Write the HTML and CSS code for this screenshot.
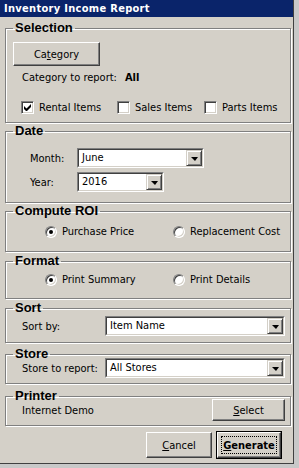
FILE: index.html
```html
<!DOCTYPE html>
<html lang="en">

<head>
    <meta charset="UTF-8">
    <title>Inventory Income Report</title>
    <link rel="stylesheet" href="styles.css">
</head>

<body>
    <div class="window">
        <div class="titlebar">Inventory Income Report</div>

        <!-- Selection -->
        <fieldset class="group sel">
            <legend>Selection</legend>
            <div class="gbody">
                <div class="btn btn-cat">Ca<u>t</u>egory</div>
                <div class="cat-row">
                    <span>Category to report:</span>
                    <b class="cat-val">All</b>
                </div>
                <div class="check-row">
                    <label class="check item-rental"><span class="box on"><svg width="7" height="7" viewBox="0 0 7 7"><path d="M0 2v3l2 2h1l4-4V0L2.5 4.5z" fill="#000"/></svg></span>Rental Items</label>
                    <label class="check item-sales"><span class="box"></span>Sales Items</label>
                    <label class="check item-parts"><span class="box"></span>Parts Items</label>
                </div>
            </div>
        </fieldset>

        <!-- Date -->
        <fieldset class="group date">
            <legend>Date</legend>
            <div class="gbody">
                <div class="field-row">
                    <span class="lbl-date">Month:</span>
                    <div class="select w-month">
                        <div class="select-in"><span class="val">June</span><span class="arrow"><i></i></span></div>
                    </div>
                </div>
                <div class="field-row">
                    <span class="lbl-date">Year:</span>
                    <div class="select w-year">
                        <div class="select-in"><span class="val">2016</span><span class="arrow"><i></i></span></div>
                    </div>
                </div>
            </div>
        </fieldset>

        <!-- Compute ROI -->
        <fieldset class="group roi">
            <legend>Compute ROI</legend>
            <div class="gbody radio-row">
                <label class="radio r-first"><span class="dot on"></span>Purchase Price</label>
                <label class="radio"><span class="dot"></span>Replacement Cost</label>
            </div>
        </fieldset>

        <!-- Format -->
        <fieldset class="group fmt">
            <legend>Format</legend>
            <div class="gbody radio-row">
                <label class="radio r-first"><span class="dot on"></span>Print Summary</label>
                <label class="radio"><span class="dot"></span>Print Details</label>
            </div>
        </fieldset>

        <!-- Sort -->
        <fieldset class="group sort">
            <legend>Sort</legend>
            <div class="gbody field-row">
                <span class="lbl-wide">Sort by:</span>
                <div class="select w-wide">
                    <div class="select-in"><span class="val">Item Name</span><span class="arrow"><i></i></span></div>
                </div>
            </div>
        </fieldset>

        <!-- Store -->
        <fieldset class="group store">
            <legend>Store</legend>
            <div class="gbody field-row">
                <span class="lbl-wide">Store to report:</span>
                <div class="select w-wide">
                    <div class="select-in"><span class="val">All Stores</span><span class="arrow"><i></i></span></div>
                </div>
            </div>
        </fieldset>

        <!-- Printer -->
        <fieldset class="group printer">
            <legend>Printer</legend>
            <div class="gbody printer-row">
                <span>Internet Demo</span>
                <div class="btn btn-select"><u>S</u>elect</div>
            </div>
        </fieldset>

        <div class="actions">
            <div class="btn btn-cancel"><u>C</u>ancel</div>
            <div class="btn-default">
                <div class="btn btn-generate"><span class="focus"><u>G</u>enerate</span></div>
            </div>
        </div>
    </div>
</body>

</html>
```

FILE: styles.css
```css
body,
html {
    margin: 0;
    padding: 0;
}

body {
    background: #c8c8c8;
    font-family: "DejaVu Sans Condensed", "DejaVu Sans", sans-serif;
    font-size: 11px;
    color: #000;
}

.window {
    width: 293px;
    height: 463px;
    background: #d4d0c8;
    border-right: 1px solid #404040;
    border-bottom: 1px solid #404040;
}

.titlebar {
    height: 17px;
    line-height: 17px;
    background: #0a246a;
    color: #fff;
    font-weight: bold;
    letter-spacing: 0.3px;
    padding-left: 4px;
}

/* Group boxes */
.group {
    margin: 0 2px 0 5px;
    padding: 0;
    border: 1px solid #808080;
    box-shadow: inset 1px 1px 0 #fff, 1px 1px 0 #fff;
    min-width: 0;
}

.group legend {
    font-family: "Liberation Sans", Arial, sans-serif;
    font-size: 13px;
    font-weight: bold;
    line-height: 14px;
    padding: 0 2px;
    margin-left: 7px;
}

/* Buttons */
.btn {
    box-sizing: border-box;
    display: flex;
    align-items: center;
    justify-content: center;
    border: 1px solid;
    border-color: #fff #404040 #404040 #fff;
    box-shadow: inset -1px -1px 0 #808080;
    background: #d4d0c8;
}

/* Selection */
.sel {
    margin-top: 4px;
}

.sel .gbody {
    padding: 7px 0 8px 7px;
}

.btn-cat {
    width: 87px;
    height: 24px;
}

.cat-row {
    display: flex;
    margin: 5px 0 0 9px;
    line-height: 13px;
}

.cat-val {
    margin-left: 8px;
}

.check-row {
    display: flex;
    margin: 17px 0 0 8px;
    line-height: 13px;
}

.check {
    display: flex;
    align-items: center;
}

.box {
    box-sizing: border-box;
    width: 13px;
    height: 13px;
    margin-right: 5px;
    border: 1px solid;
    border-color: #808080 #fff #fff #808080;
    box-shadow: inset 1px 1px 0 #404040, inset -1px -1px 0 #d4d0c8;
    background: #fff;
    display: flex;
    align-items: center;
    justify-content: center;
}

.item-rental {
    width: 96px;
}

.item-sales {
    width: 87px;
}

/* Date */
.date {
    margin-top: 1px;
}

.date .gbody {
    padding: 10px 0 10px 24px;
}

.field-row {
    display: flex;
    align-items: center;
}

.date .field-row + .field-row {
    margin-top: 4px;
}

.lbl-date {
    width: 47px;
}

.select {
    box-sizing: border-box;
    height: 20px;
    border: 1px solid;
    border-color: #808080 #fff #fff #808080;
}

.select-in {
    box-sizing: border-box;
    height: 100%;
    display: flex;
    border: 1px solid;
    border-color: #404040 #d4d0c8 #d4d0c8 #404040;
    background: #fff;
}

.val {
    flex: 1;
    padding-left: 3px;
    line-height: 16px;
}

.arrow {
    box-sizing: border-box;
    width: 16px;
    display: flex;
    align-items: center;
    justify-content: center;
    border: 1px solid;
    border-color: #d4d0c8 #404040 #404040 #d4d0c8;
    box-shadow: inset 1px 1px 0 #fff, inset -1px -1px 0 #808080;
    background: #d4d0c8;
}

.arrow i {
    width: 0;
    height: 0;
    border-left: 4px solid transparent;
    border-right: 3px solid transparent;
    border-top: 4px solid #000;
    margin-top: 1px;
}

.w-month {
    width: 127px;
}

.w-year {
    width: 87px;
}

/* Radios */
.roi {
    margin-top: 1px;
}

.roi .gbody {
    padding: 7px 0 13px 39px;
}

.fmt {
    margin-top: 2px;
}

.fmt .gbody {
    padding: 5px 0 12px 39px;
}

.radio-row {
    display: flex;
    line-height: 13px;
}

.radio {
    display: flex;
    align-items: center;
}

.r-first {
    width: 128px;
}

.dot {
    box-sizing: border-box;
    width: 12px;
    height: 12px;
    margin-right: 5px;
    border-radius: 50%;
    border: 1px solid;
    border-color: #808080 #fff #fff #808080;
    box-shadow: inset 1px 1px 0 #404040, inset -1px -1px 0 #d4d0c8;
    background: #fff;
    display: flex;
    align-items: center;
    justify-content: center;
}

.dot.on::after {
    content: "";
    width: 4px;
    height: 4px;
    border-radius: 50%;
    background: #000;
}

/* Sort / Store */
.sort {
    margin-top: 2px;
}

.sort .gbody {
    padding: 1px 5px 6px 16px;
}

.store {
    margin-top: 4px;
}

.store .gbody {
    margin-top: -3px;
    padding: 0 5px 5px 16px;
}

.lbl-wide {
    width: 83px;
}

.w-wide {
    flex: 1;
}

/* Printer */
.printer {
    margin-top: 5px;
}

.printer-row {
    display: flex;
    justify-content: space-between;
    align-items: flex-start;
    padding: 0 5px 4px 16px;
    line-height: 13px;
}

.printer-row span {
    margin-top: 1px;
}

.btn-select {
    width: 73px;
    height: 22px;
    margin-top: -4px;
}

/* Bottom buttons */
.actions {
    display: flex;
    justify-content: flex-end;
    align-items: center;
    gap: 4px;
    padding: 5px 11px 0 0;
}

.btn-cancel {
    width: 66px;
    height: 26px;
}

.btn-default {
    border: 1px solid #000;
}

.btn-generate {
    width: 64px;
    height: 26px;
    padding: 3px;
    font-weight: bold;
}

.focus {
    flex: 1;
    align-self: stretch;
    display: flex;
    align-items: center;
    justify-content: center;
    outline: 1px dotted #000;
    outline-offset: -1px;
}
```
